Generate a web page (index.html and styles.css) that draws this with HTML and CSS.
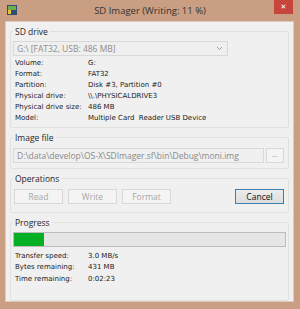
FILE: index.html
```html
<html>
    <head>
        <link rel="stylesheet" href="styles.css">
    </head>
    <body>
        <div class="window">
            <div class="titlebar">
                <svg class="appicon" width="10" height="10" viewBox="0 0 10 10">
                    <rect x="0" y="0" width="10" height="10" fill="#2d4f73"/>
                    <rect x="1" y="1" width="8" height="4" fill="#6fae4a"/>
                    <rect x="1" y="5" width="3" height="4" fill="#e8c23a"/>
                </svg>
                <div class="title">SD Imager (Writing: 11 %)</div>
                <div class="close">&#x2715;</div>
            </div>

            <div class="client">
                <fieldset class="group">
                    <legend>SD drive</legend>
                    <div class="combo">
                        <span>G:\ [FAT32, USB: 486 MB]</span>
                        <svg width="7" height="5" viewBox="0 0 7 5"><path d="M1 1 L3.5 3.5 L6 1" fill="none" stroke="#a0a0a0" stroke-width="1"/></svg>
                    </div>
                    <div class="props">
                        <div>Volume:</div><div>G:</div>
                        <div>Format:</div><div>FAT32</div>
                        <div>Partition:</div><div>Disk #3, Partition #0</div>
                        <div>Physical drive:</div><div>\\.\PHYSICALDRIVE3</div>
                        <div>Physical drive size:</div><div>486 MB</div>
                        <div>Model:</div><div>Multiple Card&nbsp; Reader USB Device</div>
                    </div>
                </fieldset>

                <fieldset class="group">
                    <legend>Image file</legend>
                    <div class="filerow">
                        <div class="textbox">D:\data\develop\OS-X\SDImager.sf\bin\Debug\moni.img</div>
                        <div class="btn disabled browse">...</div>
                    </div>
                </fieldset>

                <fieldset class="group">
                    <legend>Operations</legend>
                    <div class="buttons">
                        <div class="btn disabled">Read</div>
                        <div class="btn disabled">Write</div>
                        <div class="btn disabled">Format</div>
                        <div class="btn default">Cancel</div>
                    </div>
                </fieldset>

                <fieldset class="group last">
                    <legend>Progress</legend>
                    <div class="progress"><div class="fill" style="width: 11%"></div></div>
                    <div class="props stats">
                        <div>Transfer speed:</div><div>3.0 MB/s</div>
                        <div>Bytes remaining:</div><div>431 MB</div>
                        <div>Time remaining:</div><div>0:02:23</div>
                    </div>
                </fieldset>
            </div>
        </div>
    </body>
</html>
```

FILE: styles.css
```css
html, body {
    margin: 0;
    padding: 0;
}

body {
    background: #c99e82;
}

.window {
    width: 300px;
    height: 309px;
    background: #c99e82;
    display: flex;
    flex-direction: column;
}

.titlebar {
    height: 21px;
    display: grid;
    grid-template-columns: 1fr auto 1fr;
    align-items: center;
}

.appicon {
    margin-left: 7px;
}

.title {
    font-family: "Open Sans", sans-serif;
    font-size: 9.5px;
    color: #333;
}

.close {
    justify-self: end;
    align-self: start;
    margin-right: 7px;
    width: 19px;
    height: 14px;
    background: #c7453d;
    color: #fff;
    font-family: "DejaVu Sans", sans-serif;
    font-size: 7px;
    font-weight: bold;
    display: grid;
    place-items: center;
}

.client {
    flex: 1;
    margin: 0 6px 7px 5px;
    background: #f0f0f0;
    border: 1px solid #ddcabc;
    padding: 4px 4px 0 4px;
    display: flex;
    flex-direction: column;
    gap: 4px;
}

.group {
    margin: 0;
    padding: 0 2px 1px 2px;
    border: 1px solid #e0e0e0;
    border-radius: 2px;
    min-width: 0;
}

.group legend {
    font-family: "Open Sans", sans-serif;
    font-size: 8.5px;
    line-height: 12px;
    color: #262626;
    padding: 0 2px;
}

.combo {
    margin-top: 3px;
    width: 215px;
    height: 15px;
    box-sizing: border-box;
    border: 1px solid #d9d9d9;
    background: #efefef;
    display: flex;
    align-items: center;
    justify-content: space-between;
    padding: 0 4px 0 3px;
    font-family: "Open Sans", sans-serif;
    font-size: 8.5px;
    color: #8d8d8d;
}

.props {
    display: grid;
    grid-template-columns: 73px 1fr;
    margin: 2px 0 2px 2px;
    font-family: "DejaVu Sans", sans-serif;
    font-size: 7px;
    line-height: 11px;
    color: #222;
}

.filerow {
    display: flex;
    gap: 2px;
    margin: 4px 2px 4px 0;
}

.textbox {
    flex: 1;
    height: 15px;
    box-sizing: border-box;
    border: 1px solid #d9d9d9;
    background: #f0f0f0;
    padding-left: 3px;
    font-family: "Open Sans", sans-serif;
    font-size: 8.5px;
    line-height: 13px;
    color: #8a8a8a;
    white-space: nowrap;
    overflow: hidden;
}

.btn {
    height: 15px;
    box-sizing: border-box;
    border: 1px solid #acacac;
    background: linear-gradient(#f0f0f0, #e3e3e3);
    font-family: "Open Sans", sans-serif;
    font-size: 8.5px;
    line-height: 13px;
    text-align: center;
    color: #111;
}

.btn.disabled {
    border-color: #d8d8d8;
    background: #f4f4f4;
    color: #a8a8a8;
}

.browse {
    width: 18px;
    line-height: 10px;
}

.buttons {
    display: flex;
    gap: 5px;
    margin: 4px 2px 7px 1px;
}

.buttons .btn {
    width: 49px;
}

.buttons .default {
    margin-left: auto;
    border-color: #3c7fb1;
    background: linear-gradient(#ececec, #dddddd);
}

.progress {
    margin: 3px 0 0 0;
    height: 15px;
    box-sizing: border-box;
    border: 1px solid #bcbcbc;
    background: #e6e6e6;
}

.fill {
    height: 100%;
    background: #06b025;
}

.stats {
    margin-top: 4px;
    line-height: 11.5px;
}

.group.last {
    padding-bottom: 13px;
}
```
